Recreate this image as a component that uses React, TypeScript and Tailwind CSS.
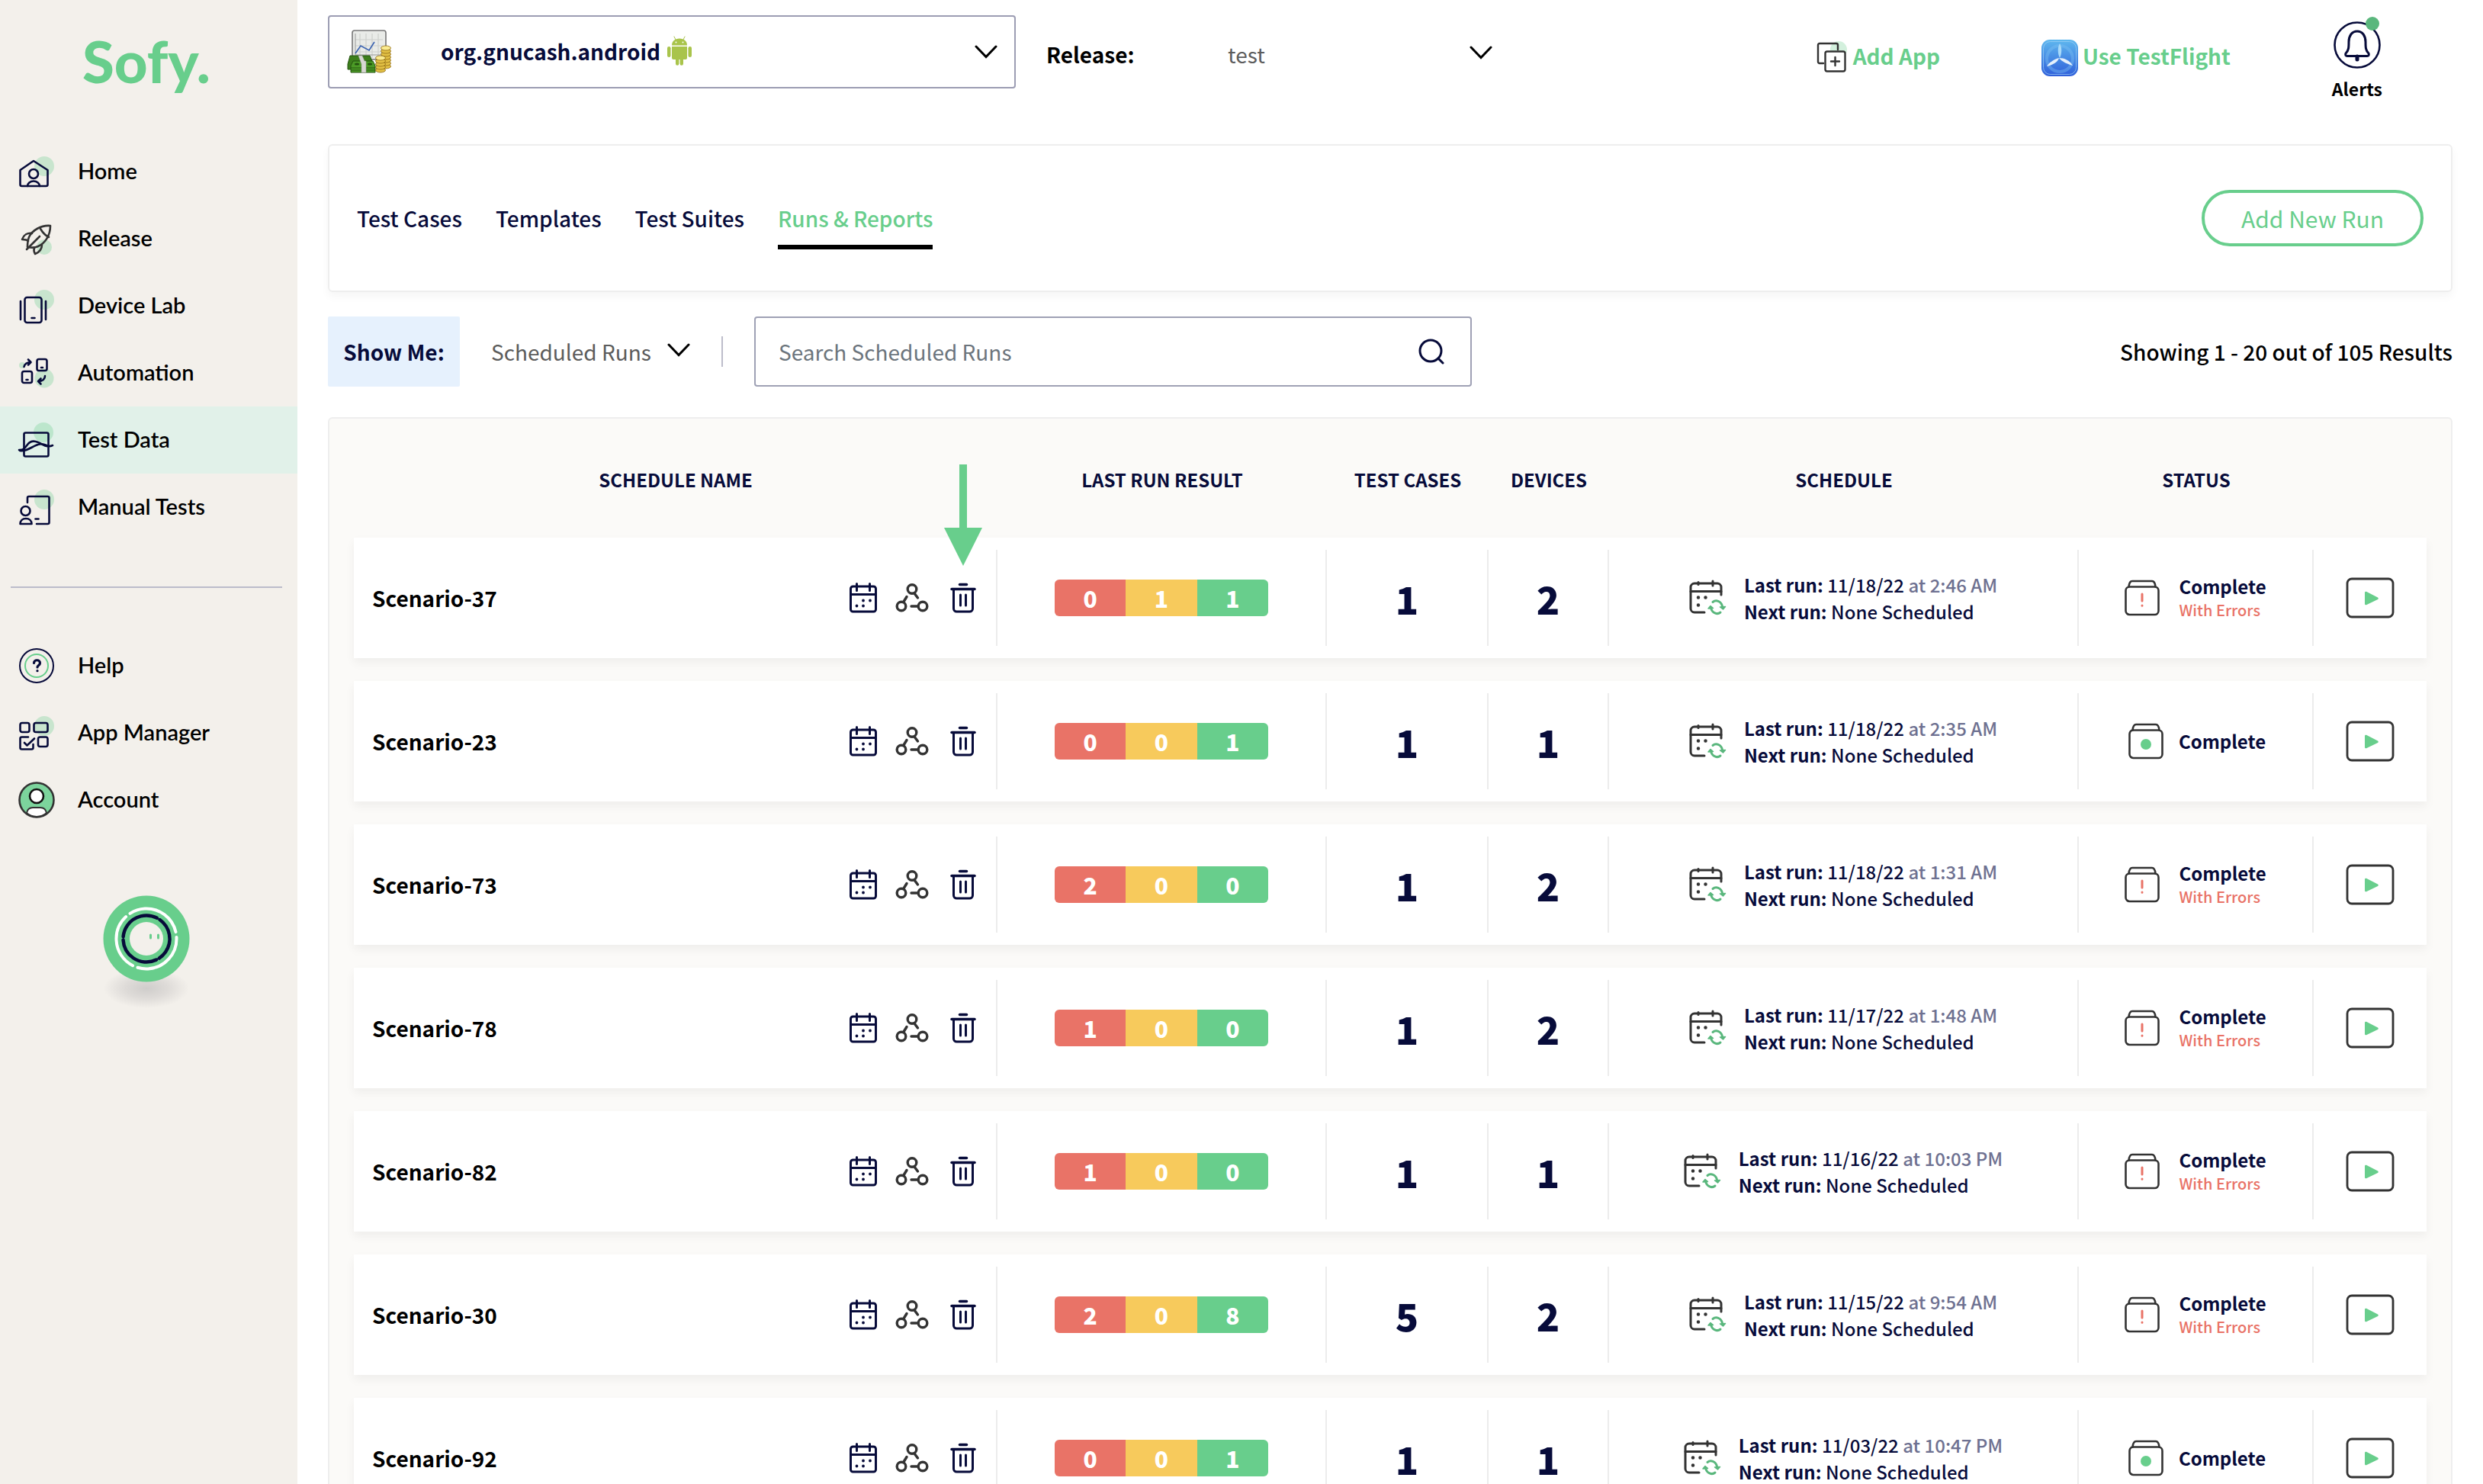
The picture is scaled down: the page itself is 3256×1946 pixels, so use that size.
import React from 'react';
import clsx from 'clsx';

type Run = {
  name: string;
  failed: number;
  warnings: number;
  passed: number;
  testCases: number;
  devices: number;
  date: string;
  time: string;
  withErrors: boolean;
};

const runs: Run[] = [
  { name: 'Scenario-37', failed: 0, warnings: 1, passed: 1, testCases: 1, devices: 2, date: '11/18/22', time: '2:46 AM', withErrors: true },
  { name: 'Scenario-23', failed: 0, warnings: 0, passed: 1, testCases: 1, devices: 1, date: '11/18/22', time: '2:35 AM', withErrors: false },
  { name: 'Scenario-73', failed: 2, warnings: 0, passed: 0, testCases: 1, devices: 2, date: '11/18/22', time: '1:31 AM', withErrors: true },
  { name: 'Scenario-78', failed: 1, warnings: 0, passed: 0, testCases: 1, devices: 2, date: '11/17/22', time: '1:48 AM', withErrors: true },
  { name: 'Scenario-82', failed: 1, warnings: 0, passed: 0, testCases: 1, devices: 1, date: '11/16/22', time: '10:03 PM', withErrors: true },
  { name: 'Scenario-30', failed: 2, warnings: 0, passed: 8, testCases: 5, devices: 2, date: '11/15/22', time: '9:54 AM', withErrors: true },
  { name: 'Scenario-92', failed: 0, warnings: 0, passed: 1, testCases: 1, devices: 1, date: '11/03/22', time: '10:47 PM', withErrors: false },
];

function NavSvg({ children }: { children: React.ReactNode }) {
  return (
    <svg
      viewBox="0 0 48 48"
      className="size-12 shrink-0 overflow-visible"
      fill="none"
      stroke="#070b3a"
      strokeWidth="2.6"
      strokeLinecap="round"
      strokeLinejoin="round"
      aria-hidden="true"
    >
      {children}
    </svg>
  );
}

function Blob({ cx, cy, r }: { cx: number; cy: number; r: number }) {
  return <circle cx={cx} cy={cy} r={r} fill="#68ce8c" fillOpacity="0.3" stroke="none" />;
}

function HomeIcon() {
  return (
    <NavSvg>
      <Blob cx={34} cy={17} r={13} />
      <path d="M20 10 38.500 22V41a2 2 0 0 1-2 2h-32a2 2 0 0 1-2-2V22z" />
      <circle cx="20" cy="27" r="6" />
      <path d="M12 43c0-3.500 3.500-6.500 8-6.500s8 3 8 6.500" />
    </NavSvg>
  );
}

function ReleaseIcon() {
  return (
    <NavSvg>
      <Blob cx={34} cy={35} r={10} />
      <g stroke="#333">
        <path d="M42 7C30 6 18 13 14 22c-2 5-2 9-2 13 5 1 10 1 14-1 9-4 16-14 16-27z" />
        <path d="M29 11c3 5 7 9 11 11" />
        <path d="M18 17c-6-1-11 2-13 8 3 0 6 0 8 2" />
        <path d="M21 36c-1 3-1 5 1 8 5-2 9-6 9-12" />
        <path d="M11 38 28 21" />
      </g>
    </NavSvg>
  );
}

function DeviceLabIcon() {
  return (
    <NavSvg>
      <Blob cx={34} cy={16} r={13} />
      <rect x="8.500" y="13" width="22" height="33" rx="3" />
      <path d="M3 18v24M36 18v24M17.500 40h4" />
    </NavSvg>
  );
}

function AutomationIcon() {
  return (
    <NavSvg>
      <Blob cx={34} cy={31} r={12.5} />
      <Blob cx={5} cy={14} r={4} />
      <rect x="24.500" y="6" width="13" height="15" rx="2.500" />
      <rect x="5" y="22" width="13" height="15" rx="2.500" />
      <path d="M30 17h2M10.500 33h2" />
      <path d="M7.500 16c1-4 4-6 9-6m-3.500-3.500L16.500 10 13 13.500" />
      <path d="M35 28c0 4-3 7-9 7m3.500-3.500L26 35l3.500 3.500" />
    </NavSvg>
  );
}

function TestDataIcon() {
  return (
    <NavSvg>
      <Blob cx={33} cy={14} r={13} />
      <rect x="7.500" y="14.500" width="32" height="31" rx="2" />
      <path d="M1 37c7 0 8-3 11-7s7-6 14-3c6 2 8 6 13 5" />
      <path d="M2 38c9 1 14-4 21-7 6-3 10-2 14 0 3 2 6 1 8 0" />
    </NavSvg>
  );
}

function ManualTestsIcon() {
  return (
    <NavSvg>
      <Blob cx={34} cy={14} r={13} />
      <path d="M12 18v-6a2 2 0 0 1 2-2h24.500a2 2 0 0 1 2 2v32a2 2 0 0 1-2 2H24" />
      <circle cx="9.500" cy="29" r="6" />
      <path d="M2.500 46c0-4 3-7 7.500-7s7.500 3 7.500 7z" />
      <path d="M22.500 39.500h4" />
    </NavSvg>
  );
}

function HelpIcon() {
  return (
    <NavSvg>
      <circle cx="24" cy="24" r="22" strokeWidth="2" />
      <circle cx="24" cy="24" r="15" stroke="#68ce8c" strokeWidth="2" />
      <path d="M20.500 20.500c0-5 8-5 8 0 0 3-3.500 3-3.500 5.500M25 30.500v.2" strokeWidth="3.200" />
    </NavSvg>
  );
}

function AppManagerIcon() {
  return (
    <NavSvg>
      <Blob cx={34} cy={15} r={13} />
      <rect x="2.500" y="11" width="12" height="12" rx="2.500" />
      <rect x="20.500" y="11" width="18" height="12" rx="2.500" />
      <rect x="26" y="29.500" width="12.500" height="12.500" rx="2.500" />
      <path d="M13 29.500H4.500a2 2 0 0 0-2 2v12a2 2 0 0 0 2 2h13a2 2 0 0 0 2-2V39" />
      <path d="m8 37 3.500 3.500L21 31.500" />
    </NavSvg>
  );
}

function AccountIcon() {
  return (
    <NavSvg>
      <circle cx="24" cy="24" r="22.500" fill="#7cd49c" stroke="#333" />
      <path d="M11 41c1-5 4-7 8-7h10c4 0 7 2 8 7-7 6.500-19 6.500-26 0z" fill="#fff" stroke="#333" strokeWidth="2" />
      <circle cx="24" cy="19" r="9" fill="#fff" stroke="#111" />
    </NavSvg>
  );
}

const mainNav = [
  { label: 'Home', Icon: HomeIcon },
  { label: 'Release', Icon: ReleaseIcon },
  { label: 'Device Lab', Icon: DeviceLabIcon },
  { label: 'Automation', Icon: AutomationIcon },
  { label: 'Test Data', Icon: TestDataIcon, active: true },
  { label: 'Manual Tests', Icon: ManualTestsIcon },
];

const secondaryNav = [
  { label: 'Help', Icon: HelpIcon },
  { label: 'App Manager', Icon: AppManagerIcon },
  { label: 'Account', Icon: AccountIcon },
];

function Mascot() {
  return (
    <svg viewBox="0 0 120 160" className="h-40 w-[120px] overflow-visible" fill="none" strokeLinecap="round" aria-hidden="true">
      <defs>
        <radialGradient id="mascot-shadow">
          <stop offset="0" stopColor="#cfcdcb" />
          <stop offset="0.5" stopColor="#dedbd8" />
          <stop offset="1" stopColor="#f3f0eb" />
        </radialGradient>
      </defs>
      <ellipse cx="60" cy="125" rx="56" ry="26" fill="url(#mascot-shadow)" />
      <circle cx="60" cy="60" r="56.500" fill="#68ce8c" />
      {/* three arcs on each ring, the inner ring is turned against the outer one */}
      <circle cx="60" cy="60" r="39.500" stroke="#fff" strokeWidth="4" pathLength="360" strokeDasharray="110 10" transform="rotate(-3 60 60)" />
      <circle cx="60" cy="60" r="30.500" stroke="#070b3a" strokeWidth="4.500" pathLength="360" strokeDasharray="112 8" transform="rotate(-55 60 60)" />
      <circle cx="60" cy="60" r="22" fill="#f3f0eb" />
      <path d="M65.500 55v4M75.500 55v4" stroke="#68ce8c" strokeWidth="3" />
    </svg>
  );
}

type NavItemProps = { label: string; Icon: () => React.ReactElement; active?: boolean };

function NavItem({ label, Icon, active }: NavItemProps) {
  return (
    <li>
      <a
        href="#"
        aria-current={active ? 'page' : undefined}
        className={clsx('flex h-[88px] items-center gap-[30px] pl-6 text-[29px] font-semibold text-black', active && 'bg-[#e1f1e9]')}
      >
        <Icon />
        <span className="pb-[3px]">{label}</span>
      </a>
    </li>
  );
}

function Sidebar() {
  return (
    <aside className="flex w-[390px] shrink-0 flex-col bg-[#f3f0eb] font-[Lato,sans-serif]">
      <a href="#" className="flex h-[181px] items-center justify-center pr-1.5 pb-[22px] text-[76px] leading-none font-black text-[#68ce8c]">
        Sofy.
      </a>
      <nav>
        <ul>
          {mainNav.map((item) => (
            <NavItem key={item.label} {...item} />
          ))}
        </ul>
        <hr className="mt-[60px] mr-5 mb-[58px] ml-3.5 border-t-2 border-[#bcbcca]" />
        <ul>
          {secondaryNav.map((item) => (
            <NavItem key={item.label} {...item} />
          ))}
        </ul>
      </nav>
      <button type="button" aria-label="Chat assistant" className="mx-auto mt-[78px] pr-1.5">
        <Mascot />
      </button>
    </aside>
  );
}

function Chevron({ className }: { className?: string }) {
  return (
    <svg viewBox="0 0 30 18" className={clsx('h-[18px] w-[30px] shrink-0', className)} fill="none" stroke="#000" strokeWidth="3" strokeLinecap="round" aria-hidden="true">
      <path d="M2 2l13 13.500L28 2" />
    </svg>
  );
}

function CoinStack({ x, top, bottom }: { x: number; top: number; bottom: number }) {
  const coins = [];
  for (let y = bottom; y > top; y -= 4) {
    coins.push(<ellipse key={y} cx={x} cy={y} rx="6.500" ry="3" fill="#e2c044" />);
  }
  return (
    <g stroke="#8f6b14" strokeWidth="0.8">
      {coins}
      <ellipse cx={x} cy={top} rx="6.500" ry="3" fill="#fbeb8f" />
    </g>
  );
}

function GnuCashLogo() {
  return (
    <svg viewBox="0 0 60 60" className="size-[60px] shrink-0" aria-hidden="true">
      <rect x="8" y="2" width="44" height="38" rx="3" fill="#e9ebe8" stroke="#777" strokeWidth="1.600" />
      <path d="M18 6v32M26 6v32M34 6v32M42 6v32M12 14h36M12 22h36M12 30h36" stroke="#cdd0cc" strokeWidth="1.200" />
      <path d="M12 6v28h36" fill="none" stroke="#999" strokeWidth="1" />
      <path d="m12 32 7-10 11 6 7-11" fill="none" stroke="#3a62b0" strokeWidth="1.600" />
      <path d="M5 35h26l4 10v8H2v-7z" fill="#3d7f1c" stroke="#245210" strokeWidth="1" />
      <path d="M9 42h26l3 6v9H6v-9z" fill="#4b9a26" stroke="#245210" strokeWidth="1" />
      <path d="M6 51h32M6 54h32" stroke="#245210" strokeWidth="0.900" />
      <ellipse cx="14" cy="46" rx="3" ry="1.500" fill="#245210" />
      <ellipse cx="31" cy="46" rx="3" ry="1.500" fill="#245210" />
      <path d="M16 35h5l3 7h2v15h-6V46z" fill="#d8d8d4" stroke="#999" strokeWidth="0.500" />
      <CoinStack x={52} top={25} bottom={49} />
      <CoinStack x={45} top={38} bottom={54} />
    </svg>
  );
}

function AndroidLogo() {
  return (
    <svg viewBox="0 0 34 40" className="h-10 w-[34px] shrink-0" fill="#a9c44b" aria-hidden="true">
      <path d="M7 12.500C7 7 11 3.500 17 3.500S27 7 27 12.500z" />
      <path d="M12 5 10 1M22 5l2-4" stroke="#a9c44b" strokeWidth="1" strokeLinecap="round" />
      <path d="M7 14h20v15a2 2 0 0 1-2 2h-3v5.500a2.200 2.200 0 0 1-4.400 0V31h-1.200v5.500a2.200 2.200 0 0 1-4.400 0V31H9a2 2 0 0 1-2-2z" />
      <rect x="1" y="14" width="4.500" height="14" rx="2.200" />
      <rect x="28.500" y="14" width="4.500" height="14" rx="2.200" />
      <circle cx="12.500" cy="8.500" r="1" fill="#fff" />
      <circle cx="21.500" cy="8.500" r="1" fill="#fff" />
    </svg>
  );
}

function AddAppIcon() {
  return (
    <svg viewBox="0 0 44 44" className="size-11 shrink-0" fill="none" stroke="#333" strokeWidth="2.400" strokeLinecap="round" strokeLinejoin="round" aria-hidden="true">
      <circle cx="31" cy="12" r="11" fill="#d3f0dd" stroke="none" />
      <path d="M11 30H6a2 2 0 0 1-2-2V6a2 2 0 0 1 2-2h22a2 2 0 0 1 2 2v6" />
      <rect x="13.500" y="14.500" width="26" height="26" rx="2.500" fill="#fff" />
      <path d="M26.500 22v11M21 27.500h11" />
    </svg>
  );
}

function TestFlightIcon() {
  return (
    <svg viewBox="0 0 48 48" className="size-12 shrink-0" fill="none" aria-hidden="true">
      <defs>
        <linearGradient id="testflight" x1="0" y1="0" x2="0" y2="1">
          <stop offset="0" stopColor="#5fb8ee" />
          <stop offset="1" stopColor="#2f5fda" />
        </linearGradient>
      </defs>
      <rect width="48" height="48" rx="11" fill="url(#testflight)" />
      <rect x="2.500" y="2.500" width="43" height="43" rx="9" stroke="#9fd0f5" strokeOpacity="0.7" />
      <circle cx="24" cy="25" r="17" stroke="#7cc0f2" strokeOpacity="0.4" strokeWidth="4" />
      <path d="M24 24c-3-6-3-14 0-19 3 5 3 13 0 19z" fill="#a9daf9" />
      <path d="M23 24c-1 5-8 9-16 11 3-5 9-9 16-11zM23 24c7 0 14 3 18 10-7-2-14-5-18-10z" fill="#e4f0fc" />
    </svg>
  );
}

function BellIcon() {
  return (
    <svg viewBox="0 0 64 72" className="h-[72px] w-16 shrink-0" fill="none" stroke="#070b3a" strokeWidth="3" strokeLinecap="round" strokeLinejoin="round" aria-hidden="true">
      <circle cx="32" cy="39" r="29.500" strokeWidth="2.600" />
      <path d="M17 50c4-4 4-8 4-15 0-8 4-14 11-14s11 6 11 14c0 7 0 11 4 15 1 2 0 3.500-2 3.500H19c-2 0-3-1.500-2-3.500z" />
      <path d="M32 54v4" strokeWidth="5" />
      <circle cx="52" cy="11" r="9" fill="#5ab77d" stroke="none" />
    </svg>
  );
}

function Header() {
  return (
    <header className="flex h-[169px] items-start">
      <button type="button" aria-haspopup="listbox" className="flex h-24 w-[902px] items-center rounded border-2 border-[#9c9db3] px-[22px]">
        <GnuCashLogo />
        <span className="ml-16 flex items-center gap-2 pb-[3px] text-[28px] leading-10 font-bold">
          org.gnucash.android
          <AndroidLogo />
        </span>
        <Chevron className="ml-auto" />
      </button>

      <div className="ml-10 flex h-[101px] items-center">
        <label htmlFor="release" className="w-[238px] text-[28px] leading-10 font-bold text-black">
          Release:
        </label>
        <div className="relative flex w-[347px] items-center">
          <select id="release" className="w-full appearance-none text-[28px] leading-10 text-[#5c5c5c]">
            <option>test</option>
          </select>
          <Chevron className="pointer-events-none absolute right-0 mb-1" />
        </div>
      </div>

      <div className="mr-[92px] ml-auto flex gap-[133px]">
        <a href="#" className="flex h-[109px] items-center gap-1.5 text-[28px] leading-10 font-bold text-[#68ce8c]">
          <AddAppIcon />
          <span className="pb-1">Add App</span>
        </a>
        <a href="#" className="flex h-[112px] items-center gap-1.5 text-[28px] leading-10 font-bold text-[#68ce8c]">
          <TestFlightIcon />
          <span className="pb-1.5">Use TestFlight</span>
        </a>
        <button type="button" className="flex flex-col items-center text-[23px] leading-8 font-bold text-black">
          <BellIcon />
          <span className="mt-2">Alerts</span>
        </button>
      </div>
    </header>
  );
}

const tabs = ['Test Cases', 'Templates', 'Test Suites', 'Runs & Reports'];

function TabsPanel() {
  return (
    <section className="flex h-[194px] items-center justify-between rounded-md border-2 border-[#eee] px-9 shadow-[0_6px_12px_rgba(0,0,0,0.04)]">
      <div role="tablist" className="flex gap-11">
        {tabs.map((tab) => {
          const selected = tab === 'Runs & Reports';
          return (
            <button
              key={tab}
              type="button"
              role="tab"
              aria-selected={selected}
              className={clsx(
                'border-b-6 pt-5 pb-[15px] text-[28px] leading-10 font-medium',
                selected ? 'border-black text-[#68ce8c]' : 'border-transparent'
              )}
            >
              {tab}
            </button>
          );
        })}
      </div>
      <button type="button" className="h-[74px] w-[291px] rounded-full border-4 border-[#68ce8c] text-[30px] leading-10 text-[#68ce8c]">
        Add New Run
      </button>
    </section>
  );
}

function FilterBar() {
  return (
    <div className="mt-8 flex h-[92px] items-center text-[28px] leading-10">
      <label htmlFor="run-type" className="flex h-full w-[173px] items-center justify-center rounded-xs bg-[#e6f1fd] font-bold">
        Show Me:
      </label>
      <div className="relative ml-[41px] flex w-[261px] items-center">
        <select id="run-type" className="w-full appearance-none text-[#5c5c5c]">
          <option>Scheduled Runs</option>
        </select>
        <Chevron className="pointer-events-none absolute right-0 mb-1" />
      </div>
      <div className="mx-[41px] h-10 w-0.5 bg-[#bcbcca]" />
      <form role="search" className="flex h-full w-[941px] items-center rounded border-2 border-[#9fa1b5] pr-[34px] pl-[30px]">
        <input type="search" aria-label="Search Scheduled Runs" placeholder="Search Scheduled Runs" className="flex-1 outline-none placeholder:text-[#6c757d]" />
        <button type="submit" aria-label="Search">
          <svg viewBox="0 0 34 34" className="size-[34px]" fill="none" stroke="#070b3a" strokeWidth="3" strokeLinecap="round" aria-hidden="true">
            <circle cx="16" cy="16" r="14" />
            <path d="m26 26 6 6" />
          </svg>
        </button>
      </form>
      <p className="ml-auto font-medium text-black">Showing 1 - 20 out of 105 Results</p>
    </div>
  );
}

function CalendarIcon() {
  return (
    <svg viewBox="0 0 36 40" className="h-10 w-9" fill="none" stroke="#070b3a" strokeWidth="3" strokeLinecap="round" aria-hidden="true">
      <rect x="1.500" y="5" width="33" height="33" rx="3" />
      <path d="M1.500 15.500h33" />
      <path d="M9.500 1.500v9M26.500 1.500v9" />
      <path d="M18 23.500v.1M27 23.500v.1M9.500 30.500v.1M18 30.500v.1" strokeWidth="3.800" />
    </svg>
  );
}

function WorkflowIcon() {
  return (
    <svg viewBox="0 0 44 40" className="h-10 w-11" fill="none" stroke="#333" strokeWidth="3.400" strokeLinecap="round" aria-hidden="true">
      <circle cx="22" cy="8.500" r="5.800" />
      <circle cx="8" cy="31" r="5.800" />
      <circle cx="36" cy="31" r="5.800" />
      <path d="m25 14 4.500 6M11 25l4-6.500M21 31h8" />
    </svg>
  );
}

function TrashIcon() {
  return (
    <svg viewBox="0 0 34 40" className="h-10 w-[34px]" fill="none" stroke="#070b3a" strokeWidth="3" strokeLinecap="round" aria-hidden="true">
      <path d="M12.500 2.500h9" strokeWidth="3.500" />
      <path d="M2 8.500h30" strokeWidth="3.500" />
      <path d="M4.500 9v25a4 4 0 0 0 4 4h17a4 4 0 0 0 4-4V9" />
      <path d="M13.500 16v14M20.500 16v14" />
    </svg>
  );
}

// Callout arrow pointing at the delete action
function DeletePointer() {
  return (
    <svg viewBox="0 0 50 133" className="pointer-events-none absolute bottom-full left-1/2 mb-[22px] h-[133px] w-[50px] -translate-x-1/2" fill="#68ce8c" aria-hidden="true">
      <path d="M20 0h10v83h20L25 133 0 83h20z" />
    </svg>
  );
}

function ScheduleIcon() {
  return (
    <svg viewBox="0 0 50 48" className="h-12 w-[50px] shrink-0" fill="none" stroke="#333" strokeWidth="3" strokeLinecap="round" strokeLinejoin="round" aria-hidden="true">
      <path d="M42 20V10a5 5 0 0 0-5-5H7a5 5 0 0 0-5 5v28a5 5 0 0 0 5 5h13" />
      <path d="M2 15.500h40M12 3.500v3M31 2v6" />
      <path d="M12 23.500v.1M21.500 23.500v.1M12 33.500v.1" strokeWidth="4.500" />
      <g stroke="#5ab77d">
        <path d="M31 29.500c4-3.500 11-1.500 12.500 5.500M41 43c-4 3.500-11 1-12.500-6" />
        <path d="m40.500 36 4 3 3-3.500zM25 38l3-3.500 3.500 3z" fill="#5ab77d" strokeWidth="1.500" />
      </g>
    </svg>
  );
}

function StatusIcon({ withErrors }: { withErrors: boolean }) {
  return (
    <svg viewBox="0 0 46 48" className="h-12 w-[46px] shrink-0" fill="none" stroke="#333" strokeWidth="2.600" strokeLinecap="round" strokeLinejoin="round" aria-hidden="true">
      <rect x="1.500" y="9.500" width="43" height="36.500" rx="5" />
      <path d="M5.500 9.500C6 5 7 2 10 2h26c3 0 4 3 4.500 7.500" />
      {withErrors ? (
        <path d="M23 19v9M23 34v.2" stroke="#e97367" strokeWidth="3" />
      ) : (
        <circle cx="23" cy="28" r="7" fill="#68ce8c" stroke="none" />
      )}
    </svg>
  );
}

function PlayIcon() {
  return (
    <svg viewBox="0 0 64 54" className="h-[54px] w-16" fill="none" aria-hidden="true">
      <rect x="2" y="2" width="60" height="50" rx="6" stroke="#333" strokeWidth="2.800" />
      <path d="M25 20v15a1.500 1.500 0 0 0 2 1.200l15-7.200a1.500 1.500 0 0 0 0-2.600l-15-7.600a1.500 1.500 0 0 0-2 1.200z" fill="#68ce8c" />
    </svg>
  );
}

function Cell({ children, className, last }: { children: React.ReactNode; className?: string; last?: boolean }) {
  return (
    <td className="bg-white px-0 py-4">
      <div className={clsx('flex h-[126px] items-center', !last && 'border-r-2 border-[#ececec]', className)}>{children}</div>
    </td>
  );
}

function RunRow({ run, highlightDelete }: { run: Run; highlightDelete: boolean }) {
  return (
    <tr className="shadow-[0_6px_12px_rgba(0,0,0,0.05)]">
      <Cell className="pr-[26px] pl-6">
        <span className="text-[28px] leading-10 font-bold text-black">{run.name}</span>
        <div className="ml-auto flex items-center">
          <button type="button" aria-label={`Edit schedule of ${run.name}`}>
            <CalendarIcon />
          </button>
          <button type="button" aria-label={`Open workflow of ${run.name}`} className="ml-6">
            <WorkflowIcon />
          </button>
          <button type="button" aria-label={`Delete ${run.name}`} className="relative ml-7">
            <TrashIcon />
            {highlightDelete && <DeletePointer />}
          </button>
        </div>
      </Cell>
      <Cell className="justify-center">
        <div className="grid w-[280px] grid-cols-3 overflow-hidden rounded-md text-center text-[30px] leading-[48px] font-black text-white">
          <span className="bg-[#e97367]">{run.failed}</span>
          <span className="bg-[#f7ca5c]">{run.warnings}</span>
          <span className="bg-[#68ce8c]">{run.passed}</span>
        </div>
      </Cell>
      <Cell className="justify-center text-[50px] leading-none font-black">{run.testCases}</Cell>
      <Cell className="justify-center text-[50px] leading-none font-black">{run.devices}</Cell>
      <Cell className="justify-center gap-[22px] text-[24px] leading-[35px]">
        <ScheduleIcon />
        <div className="font-medium">
          <p>
            <span className="font-bold">Last run:</span> {run.date} <span className="text-[#6e7191]">at {run.time}</span>
          </p>
          <p>
            <span className="font-bold">Next run:</span> None Scheduled
          </p>
        </div>
      </Cell>
      <Cell className={clsx('justify-center', run.withErrors ? 'gap-[25px]' : 'gap-5 pl-1')}>
        <StatusIcon withErrors={run.withErrors} />
        <div>
          <p className="text-[24px] leading-8 font-bold">Complete</p>
          {run.withErrors && <p className="text-[20px] leading-[30px] font-medium text-[#e97367]">With Errors</p>}
        </div>
      </Cell>
      <Cell className="justify-center" last>
        <button type="button" aria-label={`Run ${run.name}`}>
          <PlayIcon />
        </button>
      </Cell>
    </tr>
  );
}

function RunsTable() {
  return (
    <section className="mt-10 rounded-md border-2 border-[#eee] bg-[#fbfaf8] px-8">
      <table className="w-full table-fixed border-separate border-spacing-x-0 border-spacing-y-[30px]">
        <colgroup>
          <col />
          <col className="w-[432px]" />
          <col className="w-[212px]" />
          <col className="w-[158px]" />
          <col className="w-[616px]" />
          <col className="w-[308px]" />
          <col className="w-[148px]" />
        </colgroup>
        <thead>
          <tr className="h-24 text-[24px] leading-8">
            <th scope="col" className="pt-1">SCHEDULE NAME</th>
            <th scope="col" className="pt-1">LAST RUN RESULT</th>
            <th scope="col" className="pt-1">TEST CASES</th>
            <th scope="col" className="pt-1">DEVICES</th>
            <th scope="col" className="pt-1">SCHEDULE</th>
            <th scope="col" className="pt-1">STATUS</th>
            <td />
          </tr>
        </thead>
        <tbody>
          {runs.map((run, index) => (
            <RunRow key={run.name} run={run} highlightDelete={index === 0} />
          ))}
        </tbody>
      </table>
    </section>
  );
}

export default function App() {
  return (
    <div className="flex h-screen overflow-hidden bg-white font-['Noto_Sans_CJK_SC',sans-serif] text-[#070b3a]">
      <Sidebar />
      <main className="min-w-0 flex-1 overflow-hidden px-10 pt-5">
        <Header />
        <TabsPanel />
        <FilterBar />
        <RunsTable />
      </main>
    </div>
  );
}
